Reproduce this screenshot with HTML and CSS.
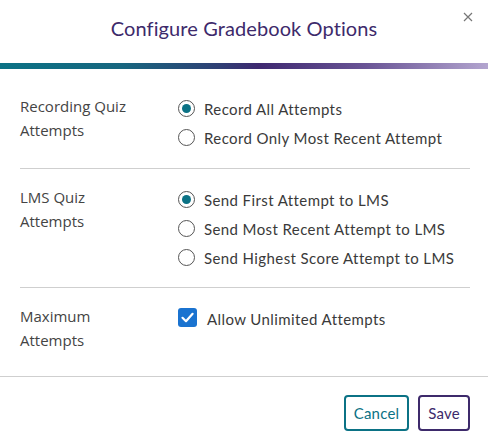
FILE: index.html
```html
<!DOCTYPE html>
<html>
<head>
<meta charset="utf-8">
<link rel="stylesheet" href="styles.css">
</head>
<body>
<div class="modal">
  <header class="header">
    <h1 class="title">Configure Gradebook Options</h1>
    <button class="close" aria-label="Close">
      <svg width="10" height="10" viewBox="0 0 10 10"><path d="M1 1L9 9M9 1L1 9" stroke="#777" stroke-width="1.2" fill="none"/></svg>
    </button>
  </header>
  <div class="bar"></div>
  <section class="section first">
    <div class="label">Recording Quiz Attempts</div>
    <div class="options">
      <label class="opt"><span class="radio on"></span>Record All Attempts</label>
      <label class="opt"><span class="radio"></span>Record Only Most Recent Attempt</label>
    </div>
  </section>
  <section class="section">
    <div class="label">LMS Quiz Attempts</div>
    <div class="options">
      <label class="opt"><span class="radio on"></span>Send First Attempt to LMS</label>
      <label class="opt"><span class="radio"></span>Send Most Recent Attempt to LMS</label>
      <label class="opt"><span class="radio"></span>Send Highest Score Attempt to LMS</label>
    </div>
  </section>
  <section class="section last">
    <div class="label">Maximum Attempts</div>
    <div class="options">
      <label class="opt"><span class="check"><svg width="19" height="19" viewBox="0 0 19 19"><path d="M4.5 9.8L8 13.2L14.6 5.8" stroke="#fff" stroke-width="2.2" fill="none" stroke-linecap="round" stroke-linejoin="round"/></svg></span>Allow Unlimited Attempts</label>
    </div>
  </section>
  <footer class="footer">
    <button class="btn cancel">Cancel</button>
    <button class="btn save">Save</button>
  </footer>
</div>
</body>
</html>
```

FILE: styles.css
```css
* { box-sizing: border-box; }
html, body { margin: 0; padding: 0; background: #fff; }
.modal {
  width: 488px;
  font-family: "Lato", "Noto Sans", sans-serif;
  color: #333;
}
.header {
  position: relative;
  height: 63px;
  display: flex;
  justify-content: center;
  padding-top: 14px;
}
.title {
  margin: 0;
  font-weight: 400;
  font-size: 20px;
  line-height: 28px;
  letter-spacing: 0.1px;
  color: #3d2a6b;
  font-family: "Lato", sans-serif;
}
.close {
  position: absolute;
  right: 15px;
  top: 12px;
  border: 0;
  background: none;
  padding: 0;
  width: 10px;
  height: 10px;
  display: block;
}
.close svg { display: block; }
.bar {
  height: 6px;
  background: linear-gradient(90deg, #0b7285 0%, #17667f 25%, #2f3f74 45%, #3e2870 53%, #6a5596 75%, #b3a5cf 100%);
}
.section {
  display: flex;
  margin: 0 18px 0 20px;
  padding: 16px 0 15px;
  border-bottom: 1px solid #cfcfcf;
}
.section.first { padding-top: 25px; padding-bottom: 16px; }
.section.last { border-bottom: 0; padding-bottom: 24px; }
.label {
  width: 158px;
  flex: none;
  font-family: "Open Sans", sans-serif;
  font-size: 15px;
  line-height: 24px;
  color: #444;
  padding-right: 30px;
}
.options {
  display: flex;
  flex-direction: column;
}
.opt {
  display: flex;
  align-items: center;
  height: 29px;
  font-size: 15px;
  letter-spacing: 0.4px;
  color: #3a3a3a;
}
.radio {
  width: 17px;
  height: 17px;
  border: 1.5px solid #555;
  border-radius: 50%;
  margin-right: 9px;
  display: flex;
  align-items: center;
  justify-content: center;
  flex: none;
}
.radio.on::after {
  content: "";
  width: 9px;
  height: 9px;
  border-radius: 50%;
  background: #0b7285;
}
.check {
  width: 19px;
  height: 19px;
  background: #1a73d0;
  border-radius: 3px;
  margin-right: 10px;
  flex: none;
  margin-top: -2px;
}
.check svg { display: block; }
.footer {
  border-top: 1px solid #cfcfcf;
  display: flex;
  justify-content: flex-end;
  gap: 9px;
  padding: 18px 18px 15px;
}
.btn {
  height: 36px;
  background: #fff;
  border: 2px solid;
  border-radius: 4px;
  font-family: "Lato", sans-serif;
  font-size: 15px;
  letter-spacing: 0.2px;
  padding: 0 6px;
}
.cancel { border-color: #0b7285; color: #0b7285; width: 65px; }
.save { border-color: #3d2a6b; color: #3d2a6b; width: 52px; }
```
